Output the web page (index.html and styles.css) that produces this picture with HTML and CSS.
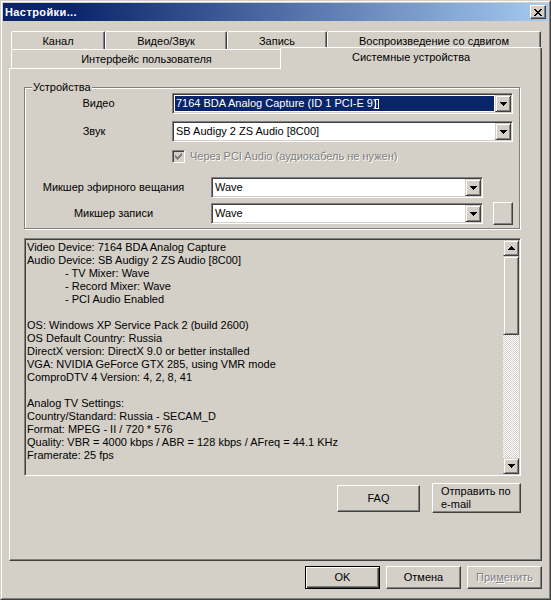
FILE: index.html
```html
<!DOCTYPE html>
<html lang="ru">
<head>
<meta charset="utf-8">
<title>Настройки...</title>
<link rel="stylesheet" href="styles.css">
</head>
<body>
<div class="window">
  <div class="frame">
    <div class="titlebar">
      <span class="title">Настройки...</span>
      <span class="close">
        <svg width="8" height="7" viewBox="0 0 8 7" shape-rendering="crispEdges"><path d="M0 0h2v1H0zM6 0h2v1H6zM1 1h2v1H1zM5 1h2v1H5zM2 2h4v1H2zM3 3h2v1H3zM2 4h4v1H2zM1 5h2v1H1zM5 5h2v1H5zM0 6h2v1H0zM6 6h2v1H6z" fill="#000"/></svg>
      </span>
    </div>

    <div class="tabs">
      <div class="tabrow back">
        <div class="tab t-kanal">Канал</div>
        <div class="tab t-video">Видео/Звук</div>
        <div class="tab t-zapis">Запись</div>
        <div class="tab t-shift">Воспроизведение со сдвигом</div>
      </div>
      <div class="tabrow front">
        <div class="tab t-ui">Интерфейс пользователя</div>
        <div class="tab t-sys selected">Системные устройства</div>
      </div>
    </div>

    <div class="panel">
      <div class="group">
        <div class="legend">Устройства</div>

        <div class="row r1">
          <div class="lbl lbl-a">Видео</div>
          <div class="combo wide">
            <div class="field"><span class="sel">7164 BDA Analog Capture (ID 1 PCI-E 9)<span class="boxglyph"></span></span></div>
            <div class="dropbtn"><svg width="7" height="4" viewBox="0 0 7 4" shape-rendering="crispEdges"><path d="M0 0h7v1h-1v1h-1v1h-1v1h-1v-1h-1v-1h-1v-1h-1z" fill="#000"/></svg></div>
          </div>
        </div>

        <div class="row r2">
          <div class="lbl lbl-a shift">Звук</div>
          <div class="combo wide">
            <div class="field"><span class="txt">SB Audigy 2 ZS Audio [8C00]</span></div>
            <div class="dropbtn"><svg width="7" height="4" viewBox="0 0 7 4" shape-rendering="crispEdges"><path d="M0 0h7v1h-1v1h-1v1h-1v1h-1v-1h-1v-1h-1v-1h-1z" fill="#000"/></svg></div>
          </div>
        </div>

        <div class="checkrow">
          <span class="checkbox"><svg width="7" height="7" viewBox="0 0 7 7" shape-rendering="crispEdges"><path d="M6 0h1v1H6zM5 1h2v1H5zM0 2h1v1H0zM4 2h3v1H4zM0 3h2v1H0zM3 3h3v1H3zM0 4h5v1H0zM1 5h3v1H1zM2 6h1v1H2z" fill="#808080"/></svg></span>
          <span class="disabled">Через PCI Audio (аудиокабель не нужен)</span>
        </div>

        <div class="row r3">
          <div class="lbl lbl-b shift">Микшер эфирного вещания</div>
          <div class="combo narrow">
            <div class="field"><span class="txt">Wave</span></div>
            <div class="dropbtn"><svg width="7" height="4" viewBox="0 0 7 4" shape-rendering="crispEdges"><path d="M0 0h7v1h-1v1h-1v1h-1v1h-1v-1h-1v-1h-1v-1h-1z" fill="#000"/></svg></div>
          </div>
        </div>

        <div class="row r4">
          <div class="lbl lbl-b shift">Микшер записи</div>
          <div class="combo narrow">
            <div class="field"><span class="txt">Wave</span></div>
            <div class="dropbtn"><svg width="7" height="4" viewBox="0 0 7 4" shape-rendering="crispEdges"><path d="M0 0h7v1h-1v1h-1v1h-1v1h-1v-1h-1v-1h-1v-1h-1z" fill="#000"/></svg></div>
          </div>
          <div class="btn smallbtn"></div>
        </div>
      </div>

      <div class="log">
        <div class="log-text">
          <div class="line">Video Device: 7164 BDA Analog Capture</div>
          <div class="line">Audio Device: SB Audigy 2 ZS Audio [8C00]</div>
          <div class="line indent">- TV Mixer: Wave</div>
          <div class="line indent">- Record Mixer: Wave</div>
          <div class="line indent">- PCI Audio Enabled</div>
          <div class="line blank"></div>
          <div class="line">OS: Windows XP Service Pack 2 (build 2600)</div>
          <div class="line">OS Default Country: Russia</div>
          <div class="line">DirectX version: DirectX 9.0 or better installed</div>
          <div class="line">VGA: NVIDIA GeForce GTX 285, using VMR mode</div>
          <div class="line">ComproDTV 4 Version: 4, 2, 8, 41</div>
          <div class="line blank"></div>
          <div class="line">Analog TV Settings:</div>
          <div class="line">Country/Standard: Russia - SECAM_D</div>
          <div class="line">Format: MPEG - II / 720 * 576</div>
          <div class="line">Quality: VBR = 4000 kbps / ABR = 128 kbps / AFreq = 44.1 KHz</div>
          <div class="line">Framerate: 25 fps</div>
        </div>
        <div class="scrollbar">
          <div class="sbtn"><svg width="7" height="4" viewBox="0 0 7 4" shape-rendering="crispEdges"><path d="M3 0h1v1h1v1h1v1h1v1h-7v-1h1v-1h1v-1h1z" fill="#000"/></svg></div>
          <div class="thumb"></div>
          <div class="track"></div>
          <div class="sbtn"><svg width="7" height="4" viewBox="0 0 7 4" shape-rendering="crispEdges"><path d="M0 0h7v1h-1v1h-1v1h-1v1h-1v-1h-1v-1h-1v-1h-1z" fill="#000"/></svg></div>
        </div>
      </div>

      <div class="actions">
        <div class="btn faq">FAQ</div>
        <div class="btn send"><span>Отправить по<br>e-mail</span></div>
      </div>
    </div>

    <div class="footer">
      <div class="btn dlg default">OK</div>
      <div class="btn dlg">Отмена</div>
      <div class="btn dlg disabled-btn">При<u>м</u>енить</div>
    </div>
  </div>
</div>
</body>
</html>
```

FILE: styles.css
```css
* { box-sizing: border-box; }
html, body { margin: 0; padding: 0; }
body {
  background: #D4D0C8;
  font-family: "Liberation Sans", Arial, sans-serif;
  font-size: 11px;
  line-height: 13px;
  color: #000;
}

.window {
  width: 551px;
  height: 600px;
  border: 1px solid;
  border-color: #D4D0C8 #404040 #404040 #D4D0C8;
  background: #D4D0C8;
}
.frame {
  height: 100%;
  border: 1px solid;
  border-color: #fff #808080 #808080 #fff;
  padding: 1px;
  display: flex;
  flex-direction: column;
}

/* title bar */
.titlebar {
  flex: none;
  height: 18px;
  display: flex;
  align-items: center;
  justify-content: space-between;
  padding: 0 2px;
  background: linear-gradient(to right, #0A246A 0%, #0A246A 12%, #A6CAF0 100%);
}
.title {
  color: #fff;
  font-weight: bold;
  letter-spacing: 0.4px;
  padding-top: 1px;
}
.close {
  width: 16px;
  height: 14px;
  display: flex;
  align-items: center;
  justify-content: center;
  background: #D4D0C8;
  border: 1px solid;
  border-color: #fff #404040 #404040 #fff;
  box-shadow: inset -1px -1px #808080;
}

/* tabs */
.tabs { flex: none; margin: 10px 0 0 8px; }
.tabrow { display: flex; }
.tabrow.back { height: 18px; }
.tabrow.front { height: 19px; align-items: flex-end; }
.tab {
  flex: none;
  height: 100%;
  padding-top: 3px;
  text-align: center;
  white-space: nowrap;
  background: #D4D0C8;
  border: 1px solid;
  border-bottom: 0;
  border-color: #fff #404040 transparent #fff;
  box-shadow: inset -1px 0 #808080;
  border-radius: 2px 2px 0 0;
}
.t-kanal { width: 94px; }
.t-video { width: 122px; }
.t-zapis { width: 100px; }
.t-shift { width: 214px; }
.t-ui { width: 271px; height: 19px; }
.tab.selected {
  width: 262px;
  height: 22px;
  margin-left: -2px;
  margin-bottom: -1px;
  position: relative;
  z-index: 2;
}

/* panel */
.panel {
  flex: none;
  margin-left: 6px;
  width: 533px;
  height: 493px;
  border: 1px solid;
  border-color: #fff #404040 #404040 #fff;
  box-shadow: inset -1px -1px #808080;
  padding: 18px 20px 0 14px;
}

.group {
  width: 496px;
  height: 142px;
  border: 1px solid #808080;
  box-shadow: inset 1px 1px #fff, 1px 1px #fff;
}
.legend {
  width: max-content;
  margin: -7px 0 -1px 7px;
  padding: 0 1px;
  background: #D4D0C8;
  position: relative;
}

.row { display: flex; align-items: center; height: 21px; }
.r2 { margin-top: 7px; }
.r3 { margin-top: 14px; }
.r4 { margin-top: 4px; height: 23px; }
.lbl { flex: none; text-align: center; white-space: nowrap; }
.lbl-a { width: 147px; }
.lbl-b { width: 186px; }
.shift { padding-right: 9px; }

.combo {
  flex: none;
  display: flex;
  height: 21px;
  padding: 1px;
  background: #fff;
  border: 1px solid;
  border-color: #808080 #fff #fff #808080;
  box-shadow: inset 1px 1px #404040, inset -1px -1px #D4D0C8;
}
.combo.wide { width: 341px; }
.combo.narrow { width: 272px; }
.field {
  flex: 1;
  display: flex;
  align-items: center;
  min-width: 0;
  white-space: nowrap;
  overflow: hidden;
}
.field .txt { padding-left: 2px; }
.field .sel {
  flex: 1;
  margin: 1px;
  height: 15px;
  line-height: 15px;
  padding-left: 1px;
  background: #0A246A;
  color: #fff;
  display: flex;
  align-items: center;
}
.boxglyph {
  display: inline-block;
  width: 4px;
  height: 10px;
  border: 1px solid #fff;
  margin-left: -2px;
}
.dropbtn, .sbtn, .thumb {
  background: #D4D0C8;
  border: 1px solid;
  border-color: #D4D0C8 #404040 #404040 #D4D0C8;
  box-shadow: inset 1px 1px #fff, inset -1px -1px #808080;
}
.dropbtn {
  flex: none;
  width: 16px;
  height: 17px;
  display: flex;
  align-items: center;
  justify-content: center;
}

.checkrow {
  display: flex;
  align-items: center;
  height: 13px;
  margin-top: 8px;
  padding-left: 147px;
}
.checkbox {
  flex: none;
  width: 13px;
  height: 13px;
  padding: 1px;
  display: flex;
  align-items: center;
  justify-content: center;
  background: #D4D0C8;
  border: 1px solid;
  border-color: #808080 #fff #fff #808080;
  box-shadow: inset 1px 1px #404040, inset -1px -1px #D4D0C8;
}
.disabled {
  margin-left: 5px;
  color: #808080;
  text-shadow: 1px 1px 0 #fff;
  white-space: nowrap;
}

/* buttons */
.btn {
  display: flex;
  align-items: center;
  justify-content: center;
  background: #D4D0C8;
  border: 1px solid;
  border-color: #fff #404040 #404040 #fff;
  box-shadow: inset -1px -1px #808080;
  white-space: nowrap;
}
.smallbtn { flex: none; width: 20px; height: 23px; margin-left: 10px; }

/* log */
.log {
  margin-top: 9px;
  height: 238px;
  display: flex;
  padding: 1px;
  border: 1px solid;
  border-color: #808080 #fff #fff #808080;
  box-shadow: inset 1px 1px #404040, inset -1px -1px #D4D0C8;
}
.log-text {
  flex: 1;
  min-width: 0;
  padding: 1px 0 0 1px;
  overflow: hidden;
  white-space: nowrap;
}
.line { height: 13px; }
.indent { padding-left: 38px; }
.scrollbar {
  flex: none;
  width: 16px;
  display: flex;
  flex-direction: column;
}
.sbtn {
  flex: none;
  height: 16px;
  display: flex;
  align-items: center;
  justify-content: center;
}
.thumb { flex: none; height: 79px; }
.track {
  flex: 1;
  background: repeating-conic-gradient(#fff 0 25%, #D4D0C8 0 50%) 0 0 / 2px 2px;
}

.actions {
  margin-top: 7px;
  display: flex;
  justify-content: flex-end;
  align-items: center;
  gap: 12px;
}
.faq { width: 83px; height: 27px; }
.send {
  width: 89px;
  height: 30px;
  justify-content: flex-start;
  padding-left: 8px;
}

/* footer */
.footer {
  flex: none;
  margin-top: 5px;
  display: flex;
  justify-content: flex-end;
  gap: 6px;
  padding-right: 6px;
}
.dlg { width: 75px; height: 23px; }
.default {
  border: 1px solid #000;
  box-shadow: inset 1px 1px #fff, inset -1px -1px #404040, inset -2px -2px #808080;
}
.disabled-btn {
  color: #808080;
  text-shadow: 1px 1px 0 #fff;
}
```
